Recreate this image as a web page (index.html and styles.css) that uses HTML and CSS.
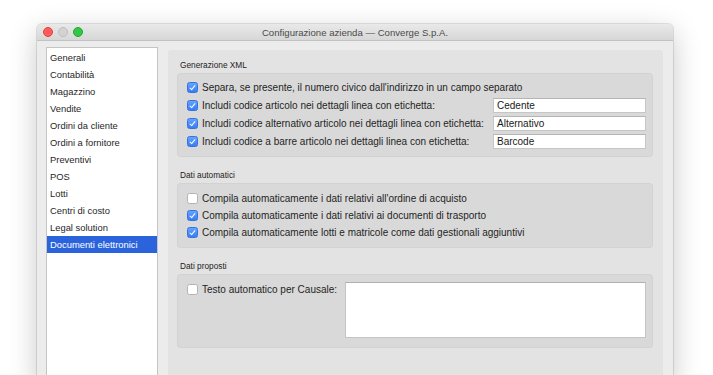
FILE: index.html
```html
<!DOCTYPE html>
<html>
<head>
  <meta charset="UTF-8" />
  <title>Configurazione azienda</title>
  <link rel="stylesheet" href="styles.css">
</head>
<body>

  <div class="window">
    <div class="titlebar">
      <div class="lights">
        <span class="light red"></span>
        <span class="light gray"></span>
        <span class="light green"></span>
      </div>
      <div class="title">Configurazione azienda — Converge S.p.A.</div>
      <div></div>
    </div>

    <div class="main">
      <!-- Sidebar -->
      <ul class="sidebar">
        <li>Generali</li>
        <li>Contabilità</li>
        <li>Magazzino</li>
        <li>Vendite</li>
        <li>Ordini da cliente</li>
        <li>Ordini a fornitore</li>
        <li>Preventivi</li>
        <li>POS</li>
        <li>Lotti</li>
        <li>Centri di costo</li>
        <li>Legal solution</li>
        <li class="selected">Documenti elettronici</li>
      </ul>

      <!-- Content -->
      <div class="panel">
        <div class="section-title first">Generazione XML</div>
        <div class="group group-xml">
          <div class="row">
            <span class="check on"></span>
            <span class="label">Separa, se presente, il numero civico dall'indirizzo in un campo separato</span>
          </div>
          <div class="row">
            <span class="check on"></span>
            <span class="label">Includi codice articolo nei dettagli linea con etichetta:</span>
            <span class="field">Cedente</span>
          </div>
          <div class="row">
            <span class="check on"></span>
            <span class="label">Includi codice alternativo articolo nei dettagli linea con etichetta:</span>
            <span class="field">Alternativo</span>
          </div>
          <div class="row">
            <span class="check on"></span>
            <span class="label">Includi codice a barre articolo nei dettagli linea con etichetta:</span>
            <span class="field">Barcode</span>
          </div>
        </div>

        <div class="section-title">Dati automatici</div>
        <div class="group group-auto">
          <div class="row">
            <span class="check"></span>
            <span class="label">Compila automaticamente i dati relativi all'ordine di acquisto</span>
          </div>
          <div class="row">
            <span class="check on"></span>
            <span class="label">Compila automaticamente i dati relativi ai documenti di trasporto</span>
          </div>
          <div class="row">
            <span class="check on"></span>
            <span class="label">Compila automaticamente lotti e matricole come dati gestionali aggiuntivi</span>
          </div>
        </div>

        <div class="section-title">Dati proposti</div>
        <div class="group group-text">
          <div class="row">
            <span class="check"></span>
            <span class="label">Testo automatico per Causale:</span>
          </div>
          <div class="textarea"></div>
        </div>
      </div>
    </div>
  </div>

</body>
</html>
```

FILE: styles.css
```css
body {
  margin: 0;
  background: #fff;
  font-family: "Liberation Sans", Arial, sans-serif;
  color: #1f1f1f;
}

.window {
  margin: 24px 0 0 37px;
  width: 636px;
  height: 360px;
  background: #ececec;
  border-radius: 5px 5px 0 0;
  box-shadow: 0 0 0 1px rgba(0,0,0,0.1), 0 8px 28px rgba(0,0,0,0.22);
  overflow: hidden;
}

.titlebar {
  height: 16px;
  border-bottom: 1px solid #c2c2c2;
  background: linear-gradient(#e9e9e9, #d7d7d7);
  display: grid;
  grid-template-columns: 1fr auto 1fr;
  align-items: center;
}

.lights {
  display: flex;
  gap: 5px;
  padding-left: 6px;
}

.light {
  width: 8px;
  height: 8px;
  border-radius: 50%;
  border: 0.5px solid transparent;
}

.light.red { background: #fc5f57; border-color: #df443e; }
.light.gray { background: #d3d3d3; border-color: #bdbdbd; }
.light.green { background: #33c748; border-color: #1ea831; }

.title {
  font-size: 9.6px;
  color: #4a4a4a;
}

.main {
  display: flex;
  padding: 6px 10px 0 9px;
}

.sidebar {
  list-style: none;
  margin: 0;
  padding: 1px 0 0;
  width: 110px;
  height: 330px;
  background: #fff;
  border: 1px solid #c4c4c4;
  font-size: 9.4px;
}

.sidebar li {
  height: 17px;
  line-height: 17px;
  padding-left: 3px;
  color: #1f1f1f;
}

.sidebar li.selected {
  background: #2b63dc;
  color: #fff;
}

.panel {
  margin: 3px 0 0 10px;
  width: 495px;
  height: 330px;
  background: #e3e3e3;
  border-radius: 3px 3px 0 0;
}

.section-title {
  height: 14px;
  line-height: 14px;
  margin: 11px 0 1px 12px;
  font-size: 8.3px;
  color: #222;
}

.section-title.first {
  margin-top: 8px;
}

.group {
  margin: 0 10px 0 9px;
  background: #d9d9d9;
  border-radius: 4px;
  box-shadow: inset 0 0 0 1px rgba(0,0,0,0.03);
  padding: 0 7px 0 10px;
}

.group-xml {
  height: 84px;
  padding-top: 5px;
  box-sizing: border-box;
}

.group-xml .row {
  height: 18px;
}

.group-auto {
  height: 65px;
  padding-top: 7px;
  box-sizing: border-box;
}

.group-auto .row {
  height: 17px;
}

.group-text {
  height: 74px;
  padding-top: 8px;
  box-sizing: border-box;
  display: flex;
  align-items: flex-start;
}

.group-text .row {
  height: 14px;
}

.row {
  display: flex;
  align-items: center;
  font-size: 10px;
}

.label {
  margin-left: 4px;
  white-space: nowrap;
}

.check {
  position: relative;
  width: 9px;
  height: 9px;
  flex: none;
  border-radius: 2.5px;
  border: 1px solid #b3b3b3;
  background: #fff;
}

.check.on {
  border-color: #3471e3;
  background: linear-gradient(#64a4fb, #3a7cf4);
}

/* check mark */
.check.on::after {
  content: "";
  position: absolute;
  left: 3px;
  top: 1px;
  width: 2px;
  height: 5px;
  border: solid #fff;
  border-width: 0 1.3px 1.3px 0;
  transform: rotate(40deg);
}

.field {
  margin-left: auto;
  width: 148px;
  height: 13px;
  line-height: 13px;
  padding-left: 3px;
  background: #fff;
  border: 1px solid #c6c6c6;
  border-top-color: #b5b5b5;
  font-size: 10px;
  color: #1a1a1a;
}

.textarea {
  margin-left: auto;
  width: 299px;
  height: 54px;
  background: #fff;
  border: 1px solid #c4c4c4;
  border-top-color: #b0b0b0;
}
```
